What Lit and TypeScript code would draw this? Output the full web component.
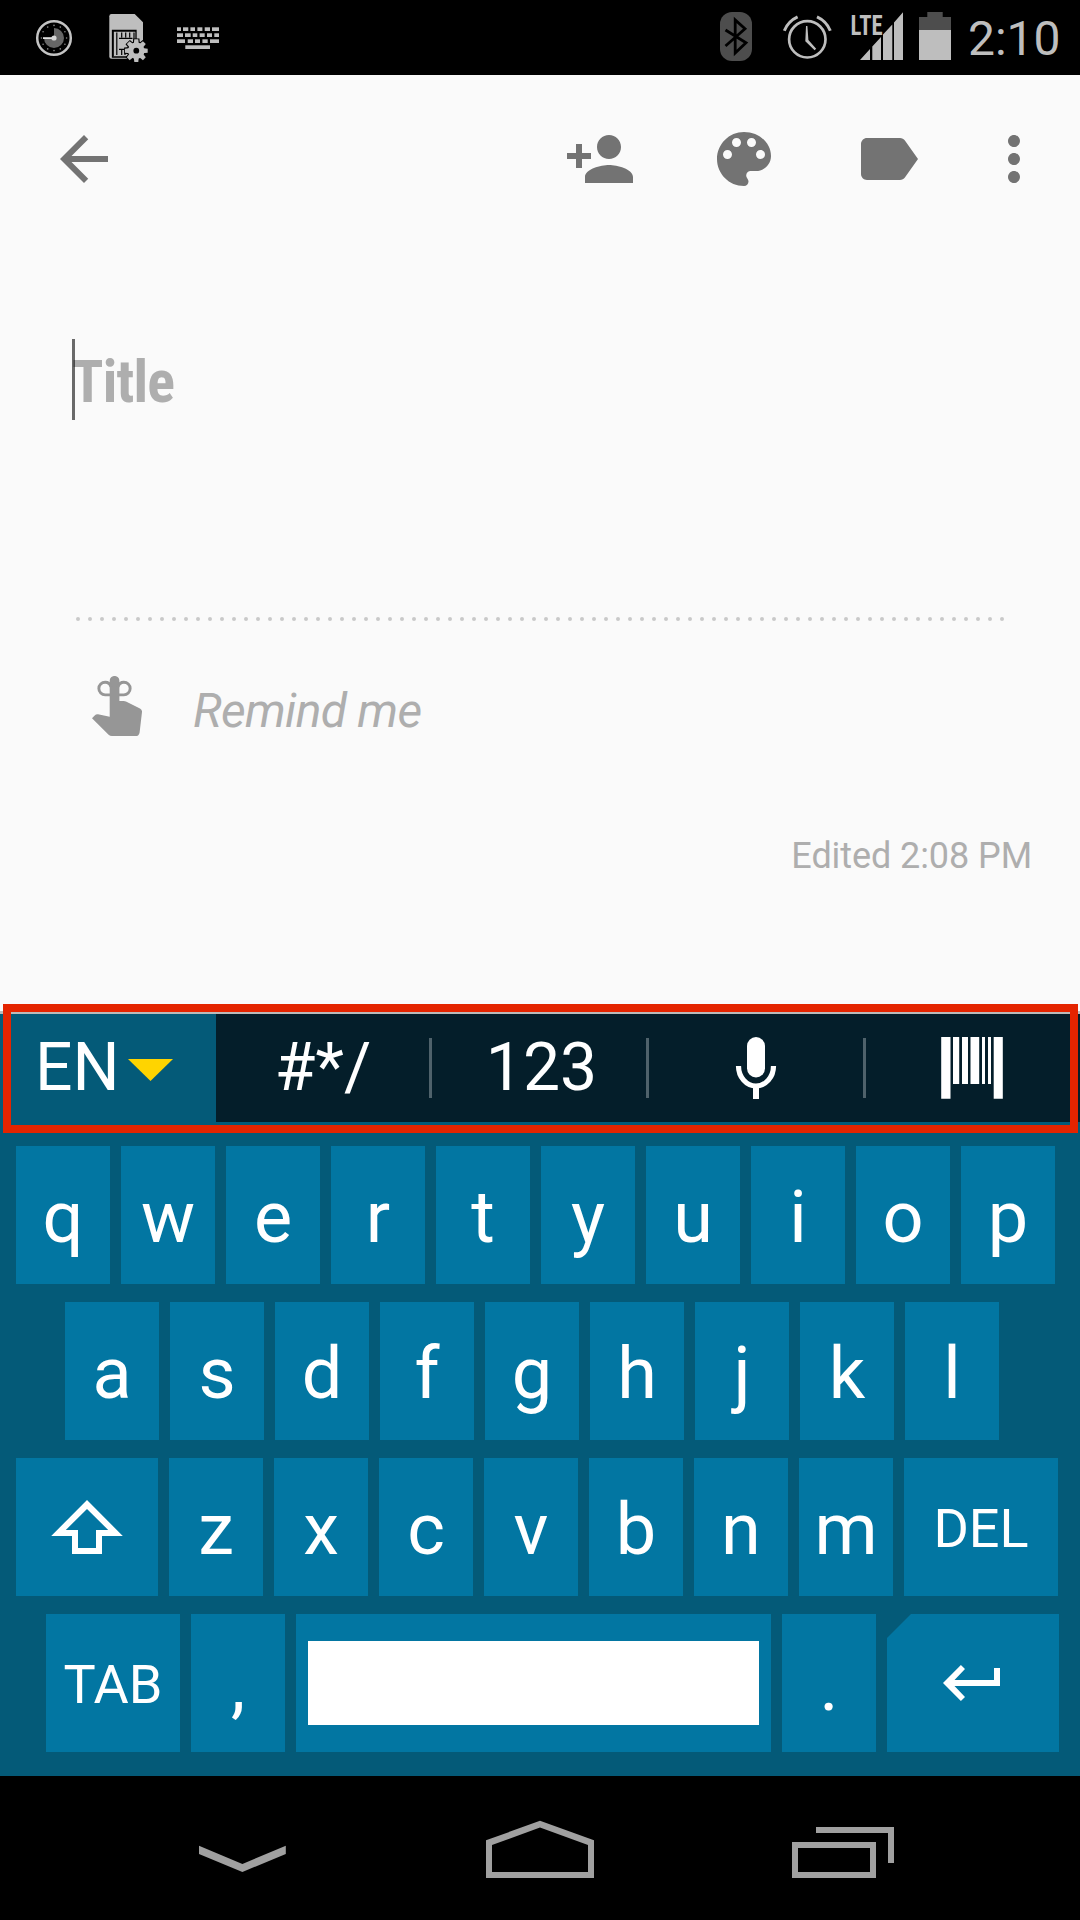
import { LitElement, html, svg, css } from "lit";
import { customElement, property } from "lit/decorators.js";
import { classMap } from "lit/directives/class-map.js";

type Span = [number, number];

const KEYBOARD_GLYPH: { y: number; spans: Span[] }[] = [
  { y: 27.3, spans: [[177, 181], [183, 188.3], [190.4, 195], [197.4, 202.4], [204.7, 210], [212, 219]] },
  { y: 33.3, spans: [[177, 183], [185, 190.7], [192.7, 197.3], [199.6, 204.7], [207, 212], [214.3, 219]] },
  { y: 39.3, spans: [[177, 185], [187.7, 193], [195, 200], [202.4, 207.7], [210, 219]] },
  { y: 45.3, spans: [[185.3, 210]] },
];

const polar = (r: number, deg: number): Span => [
  r * Math.sin((deg * Math.PI) / 180),
  -r * Math.cos((deg * Math.PI) / 180),
];

@customElement("status-bar")
export class StatusBar extends LitElement {
  static styles = css`
    :host {
      display: flex;
      flex: none;
      height: 75px;
      background: #000;
      color: #bebebe;
    }
    svg { display: block; flex: none; }
    .left, .right { display: flex; align-items: flex-start; }
    .left { padding-left: 34px; flex: 1; gap: 18px; }
    .right { padding-right: 15px; gap: 14px; }
    .bluetooth { margin-right: 13px; }
    .alarm { margin-right: 1px; }
    .clock {
      width: 97px;
      white-space: nowrap;
      font-size: 48px;
      line-height: 75px;
      padding-top: 1px;
      height: 74px;
      margin-left: 3px;
    }
    .lte {
      font-family: "Roboto Condensed", Roboto, sans-serif;
      font-size: 27px;
      font-weight: 700;
    }
  `;

  render() {
    return html`
      <div class="left">
        <svg width="55" height="75" viewBox="34 0 55 75">
          <circle cx="54" cy="38" r="16.8" fill="none" stroke="#c4c4c4" stroke-width="2.5" />
          <path d="M54 38V28a10 10 0 1 1-10 10z" fill="#666" />
          ${Array.from({ length: 12 }, (_, i) => {
            const [x, y] = polar(12.6, i * 30);
            return svg`<circle cx=${54 + x} cy=${38 + y} r=".8" fill="#8a8a8a" />`;
          })}
          <path d="M43 37.2h11v1.8H43z" fill="#e0e0e0" />
          <circle cx="54" cy="38" r="2.6" fill="#d6d6d6" />
        </svg>
        <svg width="48" height="75" viewBox="107 0 48 75">
          <path d="M111.5 14H134.7L143 22.3V58.7H111.5Q109.3 58.7 109.3 56.5V16.2Q109.3 14 111.5 14Z" fill="#bebebe" />
          <path d="M112.5 30.3H136V57H112.5Z" fill="#bebebe" stroke="#000" stroke-width="1.3" />
          <path d="M113 56.3V31H136" fill="none" stroke="#000" stroke-width="1.6" />
          <path d="M116.8 32.5V55M119 38.3h13.5M121.7 32.5v5M125.7 32.5v5M129.7 32.5v5M134 32.5v7M119 49.3h8M121.7 50v5M125 50v5" stroke="#000" stroke-width="1.2" fill="none" />
          <g transform="translate(136.3 50.7)">
            <circle r="9.4" fill="#000" />
            ${Array.from({ length: 8 }, (_, i) => svg`<path d="M-3.1 -12.2H3.1L3.6 -6H-3.6Z" fill="#000" transform="rotate(${i * 45})" />`)}
            <circle r="8.2" fill="#bebebe" />
            ${Array.from({ length: 8 }, (_, i) => svg`<path d="M-2 -11.4H2L2.6 -6H-2.6Z" fill="#bebebe" transform="rotate(${i * 45})" />`)}
            <circle r="2.9" fill="#000" />
          </g>
        </svg>
        <svg width="46" height="75" viewBox="173 0 46 75">
          ${KEYBOARD_GLYPH.map((row) =>
            row.spans.map(([a, b]) => svg`<rect x=${a} y=${row.y} width=${b - a} height="3.7" fill="#bebebe" />`)
          )}
        </svg>
      </div>
      <div class="right">
        <svg class="bluetooth" width="36" height="75" viewBox="718 0 36 75">
          <rect x="720" y="12" width="32" height="49" rx="12" fill="#4d4d4d" />
          <path d="M725.5 30L746 42.7L735.2 53V20L745 28.8L725.5 46" fill="none" stroke="#000" stroke-width="2.8" />
        </svg>
        <svg class="alarm" width="54" height="75" viewBox="781 0 54 75">
          <circle cx="807.3" cy="39.3" r="18.2" fill="none" stroke="#bebebe" stroke-width="2.7" />
          <path d="M806 26h1.4L808.4 40l7.8 8.8-1.6 1.4L805.3 41.3Z" fill="#bebebe" />
          <path d="M784.3 30.7A26 26 0 0 1 797.6 16.9M817 16.9A26 26 0 0 1 830.3 30.7" fill="none" stroke="#bebebe" stroke-width="3" />
        </svg>
        <svg width="55" height="75" viewBox="850 0 55 75">
          <path fill="#bebebe" d="M860 60L870 49V60ZM872.3 60V46.5L881 37V60ZM883 60V34.5L892.3 24.5V60ZM894 60V22.5L903 12.2V60Z" />
          <text class="lte" x="850.6" y="34.6" textLength="32" lengthAdjust="spacingAndGlyphs" fill="#bebebe">LTE</text>
        </svg>
        <svg width="32" height="75" viewBox="919 0 32 75">
          <path d="M919 30V17H927.3V12H942.7V17H951V30Z" fill="#4d4d4d" />
          <path d="M919 30H951V60H919Z" fill="#bebebe" />
        </svg>
        <div class="clock">2:10</div>
      </div>
    `;
  }
}

@customElement("note-editor")
export class NoteEditor extends LitElement {
  static styles = css`
    :host {
      display: flex;
      flex-direction: column;
      flex: none;
      height: 936px;
      background: #fafafa;
      color: #aeaeae;
    }
    svg { display: block; flex: none; }
    .bar { display: flex; padding: 48px 30px 0 48px; fill: #737373; }
    .actions { display: flex; margin-left: auto; gap: 72px; }
    .overflow { margin-left: -18px; }
    .title {
      position: relative;
      margin: 144px 72px 0;
      height: 81px;
      line-height: 86px;
      font-family: "Roboto Condensed", Roboto, sans-serif;
      font-weight: 700;
      font-size: 60px;
      letter-spacing: -0.8px;
    }
    .title-text {
      display: inline-block;
      transform: scaleX(0.965);
      transform-origin: 0 0;
    }
    .caret {
      position: absolute;
      left: 0;
      top: 0;
      width: 3px;
      height: 81px;
      background: rgba(0, 0, 0, 0.58);
    }
    .dots { margin: 197px 0 0 76px; }
    .remind { display: flex; margin-top: 55px; padding-left: 92px; }
    .remind-text {
      margin-left: 51px;
      height: 60px;
      font-size: 48px;
      line-height: 70px;
      font-style: italic;
      letter-spacing: -0.7px;
    }
    .edited {
      margin: 92px 48px 0 0;
      text-align: right;
      font-size: 36px;
      line-height: 56px;
      letter-spacing: -0.08px;
    }
  `;

  render() {
    return html`
      <div class="bar">
        <svg width="72" height="72" viewBox="0 0 24 24">
          <path d="M20 11H7.83l5.59-5.59L12 4l-8 8 8 8 1.41-1.41L7.83 13H20v-2z" />
        </svg>
        <div class="actions">
          <svg width="72" height="72" viewBox="0 0 24 24">
            <path d="M15 12c2.21 0 4-1.79 4-4s-1.79-4-4-4-4 1.79-4 4 1.79 4 4 4zm-9-2V7H4v3H1v2h3v3h2v-3h3v-2H6zm9 4c-2.67 0-8 1.34-8 4v2h16v-2c0-2.66-5.33-4-8-4z" />
          </svg>
          <svg width="72" height="72" viewBox="0 0 24 24">
            <path d="M12 3c-4.97 0-9 4.03-9 9s4.03 9 9 9c.83 0 1.5-.67 1.5-1.5 0-.39-.15-.74-.39-1.01-.23-.26-.38-.61-.38-.99 0-.83.67-1.5 1.5-1.5H16c2.76 0 5-2.24 5-5 0-4.42-4.03-8-9-8zm-5.5 9c-.83 0-1.5-.67-1.5-1.5S5.67 9 6.5 9 8 9.67 8 10.5 7.33 12 6.5 12zm3-4C8.67 8 8 7.33 8 6.5S8.67 5 9.5 5s1.5.67 1.5 1.5S10.33 8 9.5 8zm5 0c-.83 0-1.5-.67-1.5-1.5S13.67 5 14.5 5s1.5.67 1.5 1.5S15.33 8 14.5 8zm3 4c-.83 0-1.5-.67-1.5-1.5S16.67 9 17.5 9s1.5.67 1.5 1.5-.67 1.5-1.5 1.5z" />
          </svg>
          <svg width="72" height="72" viewBox="0 0 24 24">
            <path d="M17.63 5.84C17.27 5.33 16.67 5 16 5L5 5.01C3.9 5.01 3 5.9 3 7v10c0 1.1.9 1.99 2 1.99L16 19c.67 0 1.27-.33 1.63-.84L22 12l-4.37-6.16z" />
          </svg>
          <svg class="overflow" width="72" height="72" viewBox="0 0 24 24">
            <path d="M12 8c1.1 0 2-.9 2-2s-.9-2-2-2-2 .9-2 2 .9 2 2 2zm0 2c-1.1 0-2 .9-2 2s.9 2 2 2 2-.9 2-2-.9-2-2-2zm0 6c-1.1 0-2 .9-2 2s.9 2 2 2 2-.9 2-2-.9-2-2-2z" />
          </svg>
        </div>
      </div>
      <div class="title"><span class="title-text">Title</span><div class="caret"></div></div>
      <svg class="dots" width="930" height="4" viewBox="76 617 930 4">
        ${Array.from({ length: 78 }, (_, i) => svg`<circle cx=${78 + i * 12} cy="619" r="2" fill="#c9c9c9" />`)}
      </svg>
      <div class="remind">
        <svg width="50" height="60" viewBox="92 676 50 60">
          <path fill="#969696" d="M109.7 680.8a4.85 4.85 0 0 1 9.7 0V701H123.5Q125 701 126.5 701.7L140 708.4Q142.2 709.6 142 712L139.6 732.4Q139 736 135.6 736H112Q110 736 108.6 734.7L92 718.2L94.7 715.4Q96 714 98 714.2L109.7 716.7Z" />
          <path fill="none" stroke="#969696" stroke-width="2.9" d="M110.5 694.9H105.2a6.3 6.3 0 1 1 0-12.7C108 682.2 110.3 684 111 687M118.6 694.9H123.8a6.3 6.3 0 1 0 0-12.7C121 682.2 118.800 684 118 687" />
        </svg>
        <div class="remind-text">Remind me</div>
      </div>
      <div class="edited">Edited 2:08 PM</div>
    `;
  }
}

@customElement("key-cap")
export class KeyCap extends LitElement {
  @property({ type: Boolean }) small = false;
  @property({ type: Boolean }) cut = false;

  static styles = css`
    :host { display: block; flex: none; height: 138px; }
    .cap {
      box-sizing: border-box;
      display: flex;
      justify-content: center;
      height: 138px;
      padding-top: 3px;
      background: #0276a2;
      color: #fff;
      font-size: 72px;
      line-height: 138px;
    }
    .small { padding-top: 2px; font-size: 54px; }
    .cut { clip-path: polygon(24px 0, 100% 0, 100% 100%, 0 100%, 0 24px); }
  `;

  render() {
    return html`<div class=${classMap({ cap: true, small: this.small, cut: this.cut })}><slot></slot></div>`;
  }
}

@customElement("soft-keyboard")
export class SoftKeyboard extends LitElement {
  static styles = css`
    :host {
      position: relative;
      display: flex;
      flex-direction: column;
      flex: none;
      box-sizing: border-box;
      height: 765px;
      border-top: 3px solid #bbb;
      background: #045a78;
      color: #fff;
    }
    svg { display: block; flex: none; }
    .modes { display: flex; height: 108px; font-size: 66px; }
    .lang {
      display: flex;
      box-sizing: border-box;
      width: 216px;
      padding-left: 35px;
      line-height: 108px;
    }
    .arrow { margin: 45px 0 0 8px; }
    .tabs { display: flex; flex: 1; align-items: center; background: #041e2a; }
    .tab {
      display: flex;
      box-sizing: border-box;
      width: 214px;
      justify-content: center;
      line-height: 108px;
    }
    .symbols { width: 213px; padding-left: 1px; }
    .digits { padding-left: 5px; }
    .barcode { padding-right: 2px; }
    .sep { flex: none; width: 3px; height: 60px; background: #4f626b; }
    .rows { display: flex; flex-direction: column; gap: 18px; padding-top: 24px; }
    .row { display: flex; gap: 11px; padding-left: 16px; }
    .home { padding-left: 65px; }
    .bottom { padding-left: 46px; }
    .letter { width: 94px; }
    .shift { width: 142px; }
    .del { width: 154px; }
    .tab-key { width: 134px; }
    .space { width: 475px; }
    .enter { width: 172px; }
    .space-bar { width: 451px; height: 84px; margin-top: 24px; background: #fff; }
    .frame {
      position: absolute;
      left: 3px;
      top: -10px;
      width: 1075px;
      height: 129px;
      box-sizing: border-box;
      border: 8px solid #e42400;
    }
  `;

  private letters(text: string) {
    return [...text].map((c) => html`<key-cap class="letter">${c}</key-cap>`);
  }

  render() {
    return html`
      <div class="modes">
        <div class="lang">
          EN
          <svg class="arrow" width="45" height="22" viewBox="0 0 45 22"><path d="M0 0H45L22.5 22Z" fill="#ffd400" /></svg>
        </div>
        <div class="tabs">
          <div class="tab symbols">#*/</div>
          <div class="sep"></div>
          <div class="tab digits">123</div>
          <div class="sep"></div>
          <div class="tab">
            <svg width="42" height="62" viewBox="735 1037 42 62">
              <rect x="747" y="1037" width="18" height="40.5" rx="9" fill="#fff" />
              <path d="M738.5 1066A17.5 20 0 0 0 773.5 1066" fill="none" stroke="#fff" stroke-width="5.2" />
              <path d="M753 1085h6v14h-6z" fill="#fff" />
            </svg>
          </div>
          <div class="sep"></div>
          <div class="tab barcode">
            <svg width="62" height="62" viewBox="941 1037 62 62">
              <path fill="#fff" d="M941.2 1037h9.3v61.7h-9.3zM953 1037h6.2v47H953zM962 1037h6v47h-6zM970.5 1037h8.7v47h-8.7zM982 1037h3v47h-3zM988 1037h3v47h-3zM993.7 1037h9.1v61.7h-9.1z" />
            </svg>
          </div>
        </div>
      </div>
      <div class="rows">
        <div class="row">${this.letters("qwertyuiop")}</div>
        <div class="row home">${this.letters("asdfghjkl")}</div>
        <div class="row">
          <key-cap class="shift">
            <svg width="142" height="135" viewBox="16 1461 142 135">
              <path fill="#fff" fill-rule="evenodd" d="M87 1500L122.8 1536H102V1554H72V1536H51.2ZM87 1509L65.8 1530H78V1548H96V1530H108.2Z" />
            </svg>
          </key-cap>
          ${this.letters("zxcvbnm")}
          <key-cap class="del" small>DEL</key-cap>
        </div>
        <div class="row bottom">
          <key-cap class="tab-key" small>TAB</key-cap>
          ${this.letters(",")}
          <key-cap class="space"><div class="space-bar"></div></key-cap>
          ${this.letters(".")}
          <key-cap class="enter" cut>
            <svg width="172" height="135" viewBox="887 1617 172 135">
              <path fill="#fff" d="M943 1683L960.9 1665L965 1669L954.5 1680H994V1668H1000V1686H954.5L965 1697L960.9 1701Z" />
            </svg>
          </key-cap>
        </div>
      </div>
      <div class="frame"></div>
    `;
  }
}

@customElement("nav-bar")
export class NavBar extends LitElement {
  static styles = css`
    :host { display: flex; flex: none; height: 144px; background: #000; }
    svg { display: block; flex: none; }
    .buttons { display: flex; padding-left: 199px; }
    .home { margin-left: 200px; }
    .recent { margin-left: 198px; }
  `;

  render() {
    return html`
      <div class="buttons">
        <svg width="87" height="144" viewBox="199 1776 87 144">
          <path fill="#a0a0a0" d="M199 1845.7L242.4 1864L285.8 1845.7V1854L242.4 1872L199 1854Z" />
        </svg>
        <svg class="home" width="108" height="144" viewBox="486 1776 108 144">
          <path fill="#a0a0a0" fill-rule="evenodd" d="M540 1820.8L594 1840.3V1878H486V1840.3ZM540 1827.5L492 1845V1872H588V1845Z" />
        </svg>
        <svg class="recent" width="102" height="144" viewBox="792 1776 102 144">
          <path fill="#a0a0a0" fill-rule="evenodd" d="M792 1842H876V1878H792ZM798 1848V1872H870V1848ZM816 1827H894V1863H888V1833H816Z" />
        </svg>
      </div>
    `;
  }
}

@customElement("app-root")
export class AppRoot extends LitElement {
  static styles = css`
    :host {
      display: flex;
      flex-direction: column;
      width: 1080px;
      height: 1920px;
      overflow: hidden;
      font-family: Roboto, "Liberation Sans", sans-serif;
    }
  `;

  render() {
    return html`
      <status-bar></status-bar>
      <note-editor></note-editor>
      <soft-keyboard></soft-keyboard>
      <nav-bar></nav-bar>
    `;
  }
}
